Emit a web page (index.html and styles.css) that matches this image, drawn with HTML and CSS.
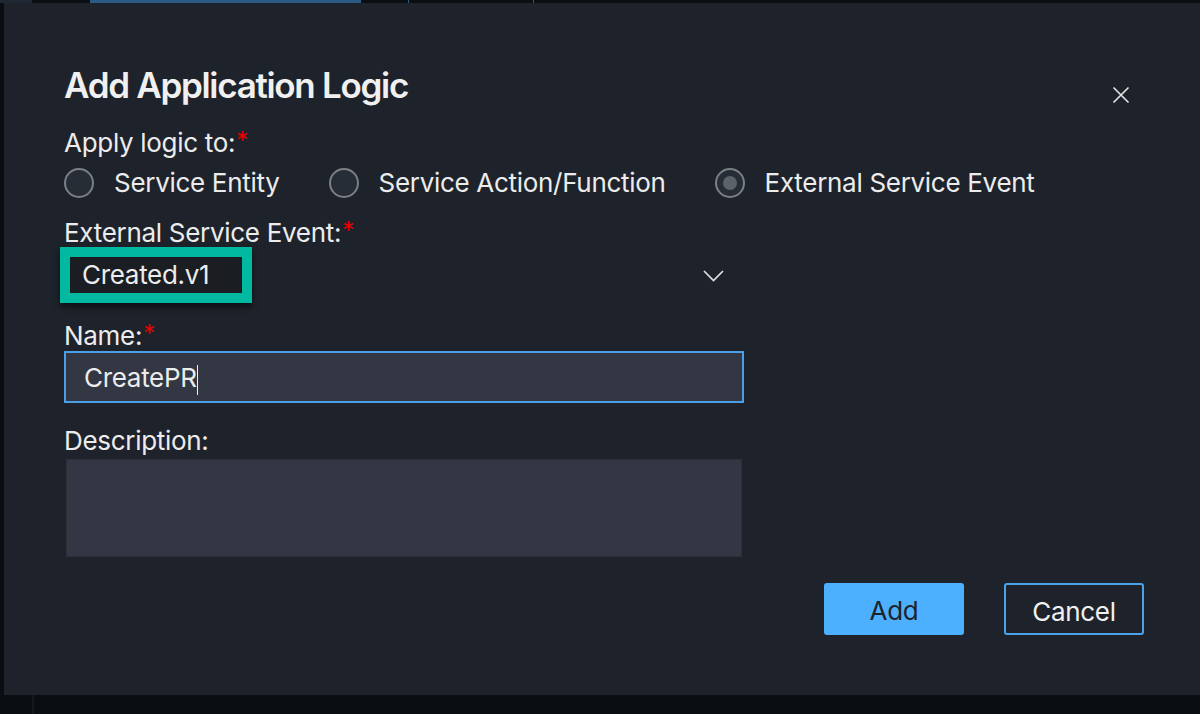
FILE: index.html
```html
<!DOCTYPE html>
<html lang="en">
<head>
<meta charset="utf-8">
<title>Add Application Logic</title>
<link rel="stylesheet" href="styles.css">
</head>
<body>
<div class="topbar">
  <span class="seg seg-a"></span>
  <span class="seg seg-b"></span>
  <span class="seg seg-c"></span>
  <span class="seg seg-d"></span>
  <span class="seg seg-line"></span>
  <span class="seg seg-e"></span>
  <span class="seg seg-line"></span>
  <span class="seg seg-f"></span>
</div>
<div class="main">
  <div class="leftstrip"></div>
  <div class="dialog">
    <div class="title-row">
      <h1 class="title">Add Application Logic</h1>
      <button class="close" aria-label="Close">
        <svg width="18" height="18" viewBox="0 0 18 18"><path d="M1.5 1.5 L16.5 16.5 M16.5 1.5 L1.5 16.5" stroke="#e6e6e6" stroke-width="1.6" fill="none"/></svg>
      </button>
    </div>
    <div class="label label-apply">Apply logic to:<span class="req">*</span></div>
    <div class="radios">
      <label class="radio"><span class="circle"></span><span class="rtext">Service Entity</span></label>
      <label class="radio"><span class="circle"></span><span class="rtext">Service Action/Function</span></label>
      <label class="radio"><span class="circle checked"><span class="dot"></span></span><span class="rtext">External Service Event</span></label>
    </div>
    <div class="label label-event">External Service Event:<span class="req">*</span></div>
    <div class="dropdown">
      <span class="value-box"><span class="value">Created.v1</span></span>
      <svg class="chevron" width="21" height="12" viewBox="0 0 21 12"><path d="M1 1 L10.5 10.5 L20 1" stroke="#e0e0e0" stroke-width="1.7" fill="none"/></svg>
    </div>
    <div class="label label-name">Name:<span class="req">*</span></div>
    <div class="input"><span class="input-text">CreatePR</span><span class="caret"></span></div>
    <div class="label label-desc">Description:</div>
    <div class="textarea"></div>
    <div class="buttons">
      <button class="btn btn-add">Add</button>
      <button class="btn btn-cancel">Cancel</button>
    </div>
  </div>
</div>
<div class="bottom"><span class="bottom-line"></span></div>
</body>
</html>
```
FILE: styles.css
```css
* { box-sizing: border-box; }
html, body { margin: 0; padding: 0; }
body {
  width: 1200px;
  height: 714px;
  overflow: hidden;
  background: #0a0d11;
  font-family: Inter, "Noto Sans", "Liberation Sans", sans-serif;
  color: #ececec;
  display: flex;
  flex-direction: column;
}
.topbar { display: flex; height: 3px; flex: none; }
.seg { display: block; height: 3px; }
.seg-a { width: 32px; background: #1d2833; }
.seg-b { width: 58px; background: #0b0e12; }
.seg-c { width: 271px; background: #2c5a86; }
.seg-d { width: 47px; background: #0b0e12; }
.seg-line { width: 1px; background: #2c5a86; }
.seg-e { width: 124px; background: #0b0e12; }
.seg-f { flex: 1; background: #0b0e12; }

.main { display: flex; height: 692px; flex: none; }
.leftstrip { width: 4px; margin-top: 17px; background: #0a0d11; flex: none; }
.dialog {
  flex: 1;
  background: #1e232b;
  padding: 60px 56px 0 60px;
  display: flex;
  flex-direction: column;
}

.title-row { display: flex; justify-content: space-between; align-items: flex-start; }
.title {
  margin: 0;
  font-size: 35px;
  line-height: 44px;
  font-weight: 600;
  letter-spacing: -1.3px;
  color: #f0f0f0;
}
.close {
  background: none; border: 0; padding: 0;
  width: 18px; height: 18px;
  margin-top: 23px; margin-right: 14px;
  display: block;
}
.close svg { display: block; }

.label { font-size: 26px; line-height: 32px; letter-spacing: -0.3px; }
.req { color: #e60000; font-size: 24px; vertical-align: 3px; margin-left: 1px; }
.label-apply { margin-top: 18px; }
.label-event { margin-top: 16px; }
.label-name { margin-top: 15px; }
.label-desc { margin-top: 22px; }

.radios { display: flex; gap: 49px; margin-top: 8px; height: 32px; align-items: center; }
.radio { display: flex; align-items: center; gap: 20px; font-size: 26px; line-height: 32px; letter-spacing: -0.3px; }
.circle {
  width: 30px; height: 30px; border-radius: 50%;
  border: 2.5px solid #7c7f85;
  background: #272d37;
  display: flex; align-items: center; justify-content: center;
  flex: none;
}
.dot { width: 14px; height: 14px; border-radius: 50%; background: #5d616a; }

.dropdown {
  display: flex; align-items: center; justify-content: space-between;
  width: 660px;
  margin-top: -2px;
}
.value-box {
  display: block;
  margin-left: -4px;
  width: 192px; height: 56px;
  border: 10px solid #00b9a0;
  background: #1a1d22;
  box-shadow: 0 4px 6px rgba(0,0,0,0.55);
  padding-left: 12px;
}
.value { font-size: 26px; line-height: 36px; display: block; letter-spacing: -0.3px; }
.chevron { display: block; margin-top: 2px; }

.input {
  margin-top: -1px;
  width: 680px; height: 52px;
  border: 2px solid #4a9fe6;
  background: #323743;
  padding-left: 18px;
  display: flex; align-items: center;
}
.input-text { font-size: 26px; line-height: 48px; display: block; margin-top: 2px; letter-spacing: -0.3px; }
.caret { display: block; width: 1.5px; height: 30px; background: #f0f0f0; margin-top: 6px; }

.textarea {
  margin-top: 2px; margin-left: 2px;
  width: 676px; height: 98px;
  background: #323743;
  border: 1px solid #2b3039;
}

.buttons { display: flex; justify-content: flex-end; gap: 40px; margin-top: 26px; }
.btn {
  width: 140px; height: 52px;
  border-radius: 3px;
  font-family: Inter, "Noto Sans", "Liberation Sans", sans-serif;
  font-size: 26px; line-height: 46px;
  letter-spacing: -0.3px;
  padding: 4px 0 0 0;
}
.btn-add { background: #4db0ff; color: #1e232b; border: 0; }
.btn-cancel { background: transparent; color: #f0f0f0; border: 2px solid #4aa3ea; }

.bottom { flex: 1; position: relative; background: #0a0d11; }
.bottom-line { position: absolute; left: 32px; top: 0; bottom: 0; width: 2px; background: #15191e; }
```
